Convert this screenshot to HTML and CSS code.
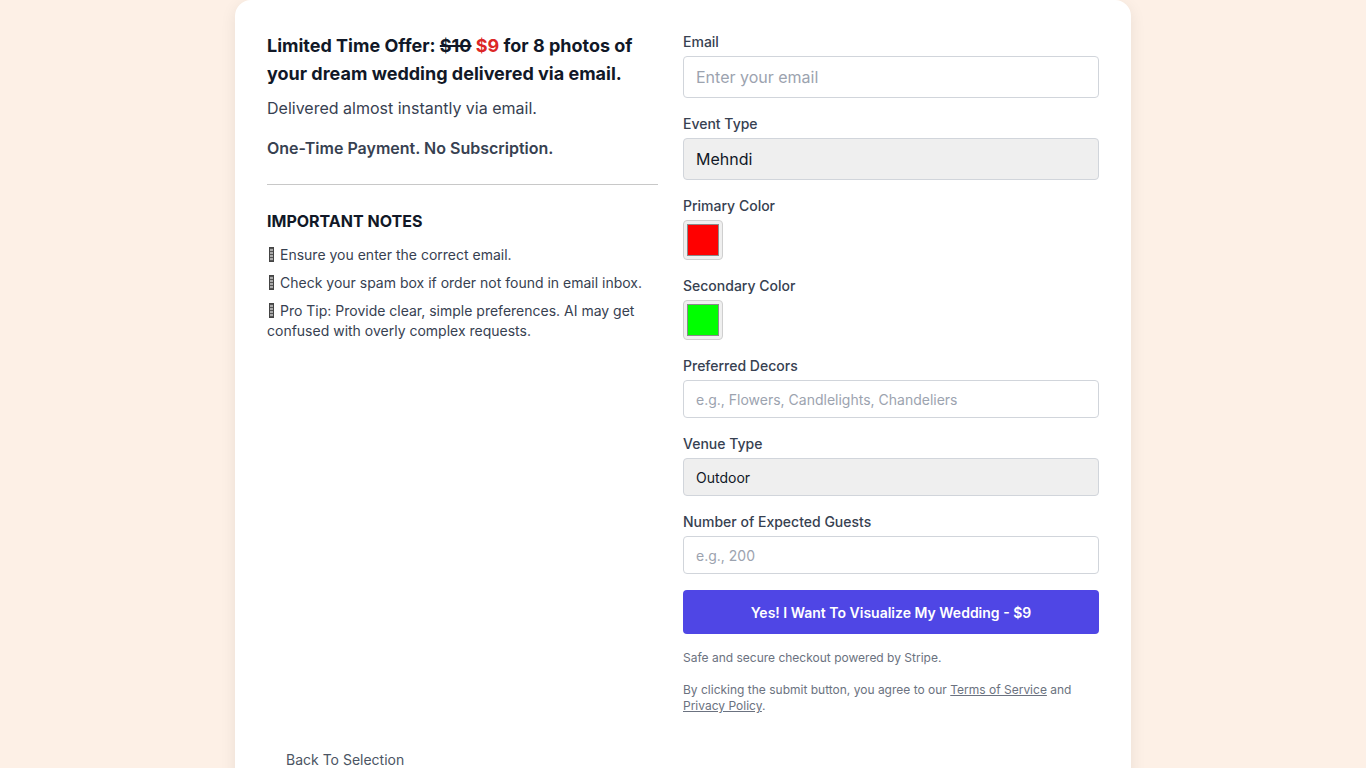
FILE: index.html
```html
<!DOCTYPE html>
<html lang="en">
<head>
    <meta charset="UTF-8">
    <meta name="viewport" content="width=device-width, initial-scale=1.0">
    <title>Order Wedding Photos</title>
    <link rel="stylesheet" href="styles.css">
</head>
<body>
    <div class="card">
        <div class="columns">
            <div class="info">
                <h2 class="offer">Limited Time Offer: <s>$10</s> <span class="price">$9</span> for 8 photos of your dream wedding delivered via email.</h2>
                <p class="sub">Delivered almost instantly via email.</p>
                <p class="once">One-Time Payment. No Subscription.</p>
                <hr class="divider">
                <h3 class="notes-title">IMPORTANT NOTES</h3>
                <ul class="notes">
                    <li><span class="tofu"></span>Ensure you enter the correct email.</li>
                    <li><span class="tofu"></span>Check your spam box if order not found in email inbox.</li>
                    <li><span class="tofu"></span>Pro Tip: Provide clear, simple preferences. AI may get confused with overly complex requests.</li>
                </ul>
            </div>

            <form class="order" onsubmit="return false">
                <div class="field">
                    <label for="email">Email</label>
                    <input type="email" id="email" class="input big" placeholder="Enter your email">
                </div>
                <div class="field">
                    <label for="event">Event Type</label>
                    <select id="event" class="select big">
                        <option>Mehndi</option>
                        <option>Haldi</option>
                        <option>Sangeet</option>
                        <option>Wedding</option>
                        <option>Reception</option>
                    </select>
                </div>
                <div class="field">
                    <label for="primary">Primary Color</label>
                    <input type="color" id="primary" class="swatch" value="#ff0000">
                </div>
                <div class="field">
                    <label for="secondary">Secondary Color</label>
                    <input type="color" id="secondary" class="swatch" value="#00ff00">
                </div>
                <div class="field">
                    <label for="decors">Preferred Decors</label>
                    <input type="text" id="decors" class="input" placeholder="e.g., Flowers, Candlelights, Chandeliers">
                </div>
                <div class="field">
                    <label for="venue">Venue Type</label>
                    <select id="venue" class="select">
                        <option>Outdoor</option>
                        <option>Indoor</option>
                    </select>
                </div>
                <div class="field">
                    <label for="guests">Number of Expected Guests</label>
                    <input type="number" id="guests" class="input" placeholder="e.g., 200">
                </div>
                <button type="submit" class="pay">Yes! I Want To Visualize My Wedding - $9</button>
                <p class="small">Safe and secure checkout powered by Stripe.</p>
                <p class="small">By clicking the submit button, you agree to our <a href="#">Terms of Service</a> and <a href="#">Privacy Policy</a>.</p>
            </form>
        </div>

        <div class="back-row">
            <button type="button" class="back">Back To Selection</button>
        </div>
    </div>
</body>
</html>
```

FILE: styles.css
```css
body {
    font-family: Inter, "Noto Sans", sans-serif;
    background-color: #fdf0e6;
    margin: 0;
    padding: 0;
    color: #111827;
}

.card {
    width: 896px;
    box-sizing: border-box;
    margin: 0 auto;
    padding: 32px 32px 40px;
    background-color: #fff;
    border-radius: 16px;
    box-shadow: 0 4px 16px rgba(0, 0, 0, 0.08);
    min-height: 820px;
}

.columns {
    display: grid;
    grid-template-columns: 391px 416px;
    column-gap: 25px;
    align-items: start;
}

/* left column */
.offer {
    margin: 0;
    font-size: 18px;
    line-height: 28px;
    font-weight: 700;
    color: #111827;
}

.offer s {
    text-decoration-thickness: 2px;
}

.price {
    color: #dc2626;
}

.sub {
    margin: 8px 0 0;
    font-size: 16px;
    line-height: 24px;
    color: #374151;
}

.once {
    margin: 16px 0 0;
    font-size: 16px;
    line-height: 24px;
    font-weight: 600;
    color: #374151;
}

.divider {
    margin: 24px 0 0;
    border: 0;
    border-top: 1px solid #c8c8c8;
}

.notes-title {
    margin: 24px 0 0;
    font-size: 16px;
    line-height: 24px;
    font-weight: 700;
    color: #111827;
}

.notes {
    list-style: none;
    margin: 12px 0 0;
    padding: 0;
    display: flex;
    flex-direction: column;
    gap: 8px;
}

.notes li {
    font-size: 14px;
    line-height: 20px;
    color: #374151;
}

/* missing-glyph box in front of each note */
.tofu {
    display: inline-block;
    width: 3px;
    height: 13px;
    margin: 0 6px 0 2px;
    vertical-align: -2px;
    border: 1px solid #444;
    background: repeating-linear-gradient(#555 0 1px, #aaa 1px 3px);
}

/* form */
.order {
    display: flex;
    flex-direction: column;
    gap: 16px;
}

.field label {
    display: block;
    margin-bottom: 4px;
    font-size: 14px;
    line-height: 20px;
    font-weight: 500;
    color: #374151;
}

.input,
.select {
    display: block;
    width: 100%;
    box-sizing: border-box;
    height: 38px;
    padding: 0 12px;
    font-family: inherit;
    font-size: 14px;
    color: #111827;
    border: 1px solid #d1d5db;
    border-radius: 4px;
    background-color: #fff;
    outline: none;
}

.input::placeholder {
    color: #9ca3af;
}

.select {
    appearance: none;
    -webkit-appearance: none;
    background-color: #efefef;
}

.big {
    height: 42px;
    font-size: 16px;
}

.swatch {
    display: block;
    width: 40px;
    height: 40px;
    margin: 0;
    padding: 0;
    border: 1px solid #cfcfcf;
    border-radius: 4px;
    background-color: #efefef;
}

.swatch::-webkit-color-swatch-wrapper {
    padding: 3px;
}

.swatch::-webkit-color-swatch {
    border: 1px solid #8a8a8a;
    border-radius: 0;
}

.pay {
    height: 44px;
    border: 0;
    border-radius: 4px;
    background-color: #4f46e5;
    color: #fff;
    font-family: inherit;
    font-size: 14px;
    font-weight: 600;
    cursor: pointer;
}

.small {
    margin: 0;
    font-size: 12px;
    line-height: 16px;
    color: #6b7280;
}

.small a {
    color: #6b7280;
}

.back-row {
    margin-top: 28px;
}

.back {
    padding: 8px 19px;
    border: 0;
    background: none;
    font-family: inherit;
    font-size: 14px;
    line-height: 20px;
    color: #4b5563;
    cursor: pointer;
}
```
